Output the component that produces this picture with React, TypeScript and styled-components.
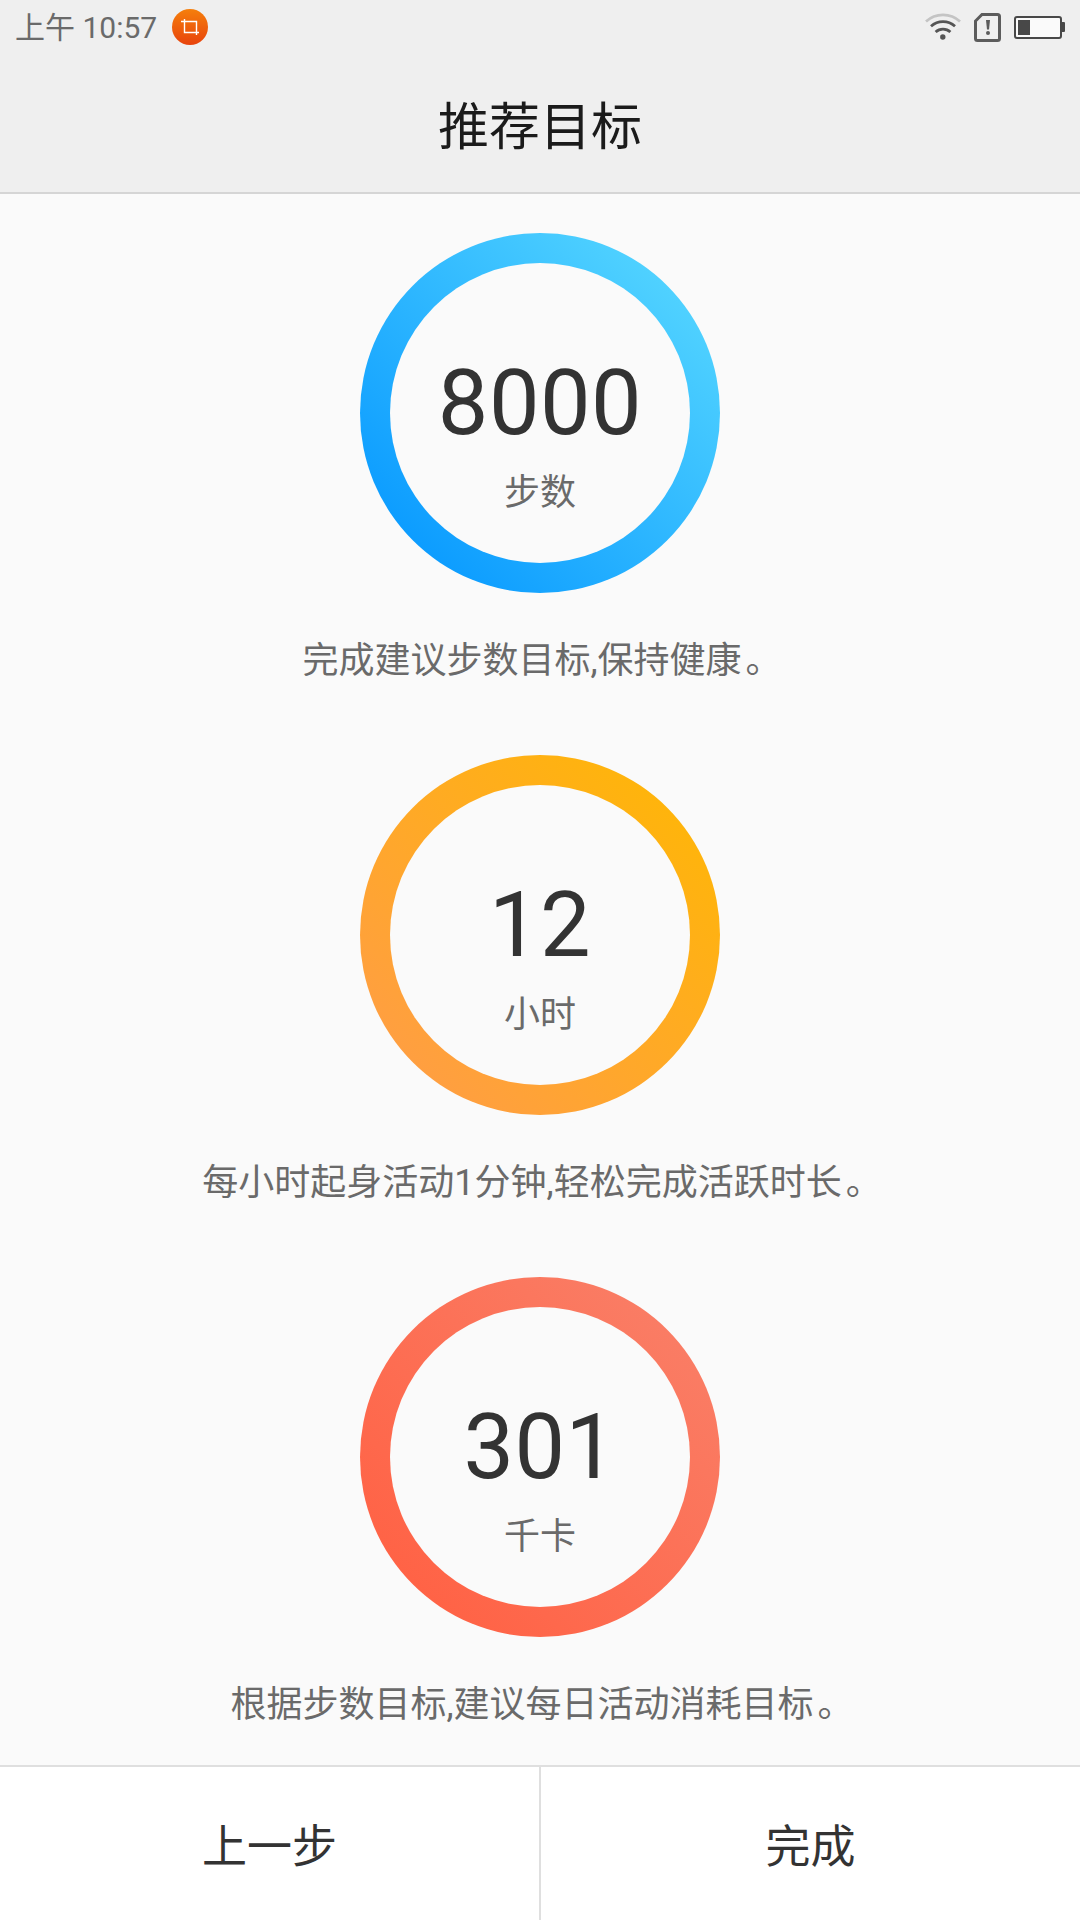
import React from "react";
import styled, { createGlobalStyle } from "styled-components";

const GlobalStyle = createGlobalStyle`
  * { box-sizing: border-box; }
  body {
    margin: 0;
    background: #fafafa;
    font-family: Roboto, "Noto Sans CJK SC", sans-serif;
  }
`;

const Screen = styled.div`
  display: flex;
  flex-direction: column;
  width: 1080px;
  height: 1920px;
  background: #fafafa;
`;

const TopArea = styled.header`
  height: 194px;
  background: #efefef;
  border-bottom: 2px solid #d5d5d5;
`;

const StatusBar = styled.div`
  display: flex;
  justify-content: space-between;
  height: 54px;
  padding: 0 15px;
`;

const StatusGroup = styled.div<{ $gap: number }>`
  display: flex;
  align-items: center;
  gap: ${({ $gap }) => $gap}px;
`;

const Clock = styled.span`
  padding-top: 2px;
  font-size: 30px;
  line-height: 52px;
  color: #6a6a6a;
  white-space: nowrap;
`;

const Title = styled.h1`
  margin: 0;
  height: 138px;
  font-size: 51px;
  font-weight: 400;
  line-height: 148px;
  text-align: center;
  color: #1b1b1b;
`;

const Goals = styled.main`
  flex: 1;
  display: flex;
  flex-direction: column;
  padding-top: 39px;
`;

const Goal = styled.section`
  display: flex;
  flex-direction: column;
  align-items: center;
  height: 522px;
  flex-shrink: 0;
  &:last-child { height: 480px; }
`;

const Ring = styled.div<{ $from: string; $to: string }>`
  width: 360px;
  height: 360px;
  padding: 30px;
  border-radius: 50%;
  background: linear-gradient(45deg, ${({ $from }) => $from} 15%, ${({ $to }) => $to} 85%);
`;

const RingInner = styled.div`
  display: flex;
  flex-direction: column;
  align-items: center;
  height: 300px;
  padding-top: 88px;
  border-radius: 50%;
  background: #fafafa;
`;

const Value = styled.div`
  font-size: 90px;
  line-height: 106px;
  letter-spacing: 0.5px;
  color: #333;
`;

const Unit = styled.div`
  margin-top: 9px;
  font-size: 36px;
  line-height: 54px;
  color: #6a6a6a;
`;

const Caption = styled.p`
  margin: 41px 0 0;
  font-size: 36px;
  line-height: 54px;
  color: #6a6a6a;
  white-space: nowrap;
`;

const FullStop = styled.span`
  margin: 0 -4px 0 4px;
`;

const FooterBar = styled.footer`
  display: flex;
  height: 155px;
  border-top: 2px solid #dfdfdf;
  background: #fff;
`;

const FooterButton = styled.button<{ $divided?: boolean }>`
  width: ${({ $divided }) => ($divided ? 541 : 539)}px;
  margin: 0;
  padding: 0;
  border: 0;
  border-left: ${({ $divided }) => ($divided ? "2px solid #dfdfdf" : "0")};
  background: none;
  font-family: inherit;
  font-size: 45px;
  color: #333;
`;

const CropBadge = () => (
  <svg width="36" height="36" viewBox="0 0 36 36">
    <defs>
      <linearGradient id="badge" x1="0" y1="0" x2="0" y2="1">
        <stop offset="0" stopColor="#f57f0c" />
        <stop offset="1" stopColor="#e8430c" />
      </linearGradient>
    </defs>
    <circle cx="18" cy="18" r="18" fill="url(#badge)" />
    <path d="M9 12.5H24.5V26M12.5 10V23.5H27" fill="none" stroke="#fff" strokeWidth="1.4" />
  </svg>
);

const WifiIcon = () => (
  <svg width="36" height="28" viewBox="0 0 36 28" fill="none">
    <path d="M1 8.5A25 25 0 0 1 35 8.5" stroke="#c4c4c4" strokeWidth="2.8" />
    <path d="M6 13.3A18 18 0 0 1 30 13.3" stroke="#555" strokeWidth="2.8" />
    <path d="M10.6 19A11 11 0 0 1 25.4 19" stroke="#555" strokeWidth="2.8" />
    <circle cx="17.8" cy="24" r="2.7" fill="#555" />
  </svg>
);

const SimIcon = () => (
  <svg width="27" height="29" viewBox="0 0 27 29" fill="none">
    <path d="M8 1.5H23.5Q25.5 1.5 25.5 3.5V25.5Q25.5 27.5 23.5 27.5H3.5Q1.5 27.5 1.5 25.5V8Z" stroke="#5c5c5c" strokeWidth="3" />
    <path d="M12 7H16L15 16.5H13Z" fill="#5c5c5c" />
    <circle cx="14" cy="20" r="2" fill="#5c5c5c" />
  </svg>
);

const BatteryIcon = () => (
  <svg width="51" height="23" viewBox="0 0 51 23">
    <rect x="1" y="1" width="46" height="21" rx="2" fill="#fafafa" stroke="#484848" strokeWidth="2" />
    <rect x="4" y="4" width="12" height="15" fill="#484848" />
    <path d="M48 6H50Q51 6 51 7V15Q51 16 50 16H48Z" fill="#484848" />
  </svg>
);

const goals = [
  { value: "8000", unit: "步数", text: "完成建议步数目标,保持健康", from: "#0d9dff", to: "#4fd1ff" },
  { value: "12", unit: "小时", text: "每小时起身活动1分钟,轻松完成活跃时长", from: "#ff9f40", to: "#ffb40c" },
  { value: "301", unit: "千卡", text: "根据步数目标,建议每日活动消耗目标", from: "#ff6346", to: "#fa7c64" },
];

export default function App() {
  return (
    <Screen>
      <GlobalStyle />
      <TopArea>
        <StatusBar>
          <StatusGroup $gap={15}>
            <Clock>上午 10:57</Clock>
            <CropBadge />
          </StatusGroup>
          <StatusGroup $gap={13}>
            <WifiIcon />
            <SimIcon />
            <BatteryIcon />
          </StatusGroup>
        </StatusBar>
        <Title>推荐目标</Title>
      </TopArea>
      <Goals>
        {goals.map((g) => (
          <Goal key={g.unit}>
            <Ring $from={g.from} $to={g.to}>
              <RingInner>
                <Value>{g.value}</Value>
                <Unit>{g.unit}</Unit>
              </RingInner>
            </Ring>
            <Caption>
              {g.text}
              <FullStop>。</FullStop>
            </Caption>
          </Goal>
        ))}
      </Goals>
      <FooterBar>
        <FooterButton>上一步</FooterButton>
        <FooterButton $divided>完成</FooterButton>
      </FooterBar>
    </Screen>
  );
}
